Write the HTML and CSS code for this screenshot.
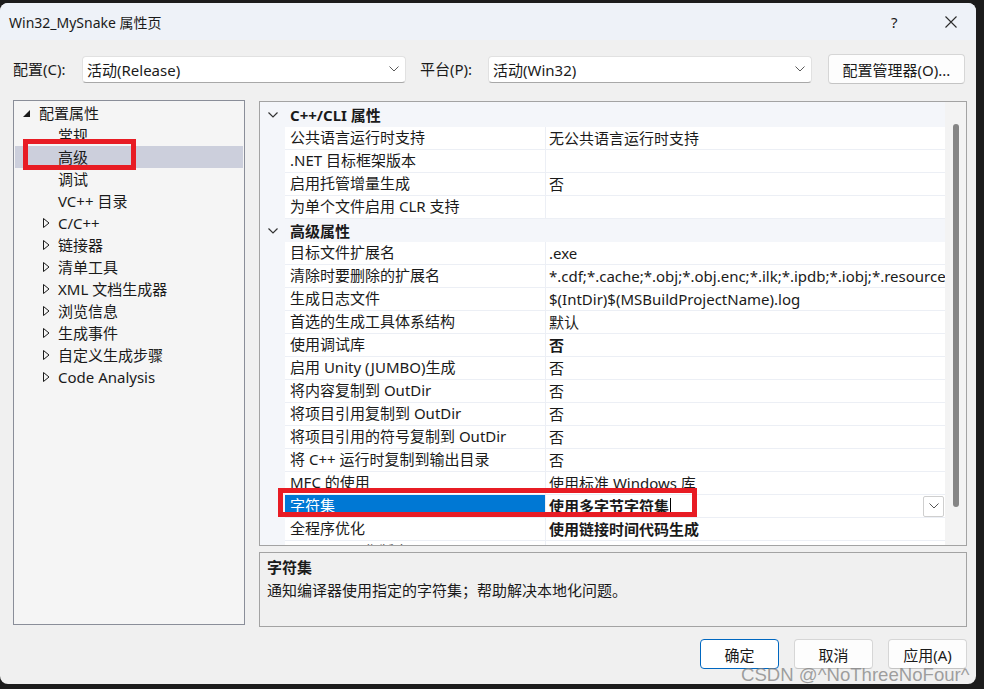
FILE: index.html
```html
<!DOCTYPE html>
<html lang="zh-CN">
<head>
  <meta charset="UTF-8">
  <title>Win32_MySnake 属性页</title>
  <link rel="stylesheet" href="styles.css">
</head>
<body>
  <div class="dialog">
    <div class="titlebar">
      <span class="title">Win32_MySnake 属性页</span>
      <span class="help">?</span>
      <span class="close">
        <svg width="12" height="12" viewBox="0 0 12 12"><path d="M0.5 0.5 L11.5 11.5 M11.5 0.5 L0.5 11.5" stroke="#2b2b2b" stroke-width="1.1" fill="none"/></svg>
      </span>
    </div>

    <div class="content">
      <div class="config-row">
        <label class="lbl">配置(C):</label>
        <div class="combo">
          <span>活动(Release)</span>
          <svg class="chev" width="10" height="6" viewBox="0 0 10 6"><path d="M0.5 0.5 L5 5 L9.5 0.5" stroke="#5a5a5a" fill="none"/></svg>
        </div>
        <label class="lbl lbl-platform">平台(P):</label>
        <div class="combo">
          <span>活动(Win32)</span>
          <svg class="chev" width="10" height="6" viewBox="0 0 10 6"><path d="M0.5 0.5 L5 5 L9.5 0.5" stroke="#5a5a5a" fill="none"/></svg>
        </div>
        <button class="btn btn-manager">配置管理器(O)...</button>
      </div>

      <div class="main">
        <!-- left: property category tree -->
        <div class="tree">
          <div class="node root">
            <span class="tw"><svg width="8" height="7" viewBox="0 0 8 7"><path d="M7 0 L7 7 L0 7 Z" fill="#1a1a1a"/></svg></span>
            <span>配置属性</span>
          </div>
          <div class="node leaf"><span>常规</span></div>
          <div class="node leaf selected"><span>高级</span></div>
          <div class="node leaf"><span>调试</span></div>
          <div class="node leaf"><span>VC++ 目录</span></div>
          <div class="node child"><span class="tw"><svg width="7" height="10" viewBox="0 0 7 10"><path d="M0.5 0.5 L6 5 L0.5 9.5 Z" stroke="#1a1a1a" fill="none"/></svg></span><span>C/C++</span></div>
          <div class="node child"><span class="tw"><svg width="7" height="10" viewBox="0 0 7 10"><path d="M0.5 0.5 L6 5 L0.5 9.5 Z" stroke="#1a1a1a" fill="none"/></svg></span><span>链接器</span></div>
          <div class="node child"><span class="tw"><svg width="7" height="10" viewBox="0 0 7 10"><path d="M0.5 0.5 L6 5 L0.5 9.5 Z" stroke="#1a1a1a" fill="none"/></svg></span><span>清单工具</span></div>
          <div class="node child"><span class="tw"><svg width="7" height="10" viewBox="0 0 7 10"><path d="M0.5 0.5 L6 5 L0.5 9.5 Z" stroke="#1a1a1a" fill="none"/></svg></span><span>XML 文档生成器</span></div>
          <div class="node child"><span class="tw"><svg width="7" height="10" viewBox="0 0 7 10"><path d="M0.5 0.5 L6 5 L0.5 9.5 Z" stroke="#1a1a1a" fill="none"/></svg></span><span>浏览信息</span></div>
          <div class="node child"><span class="tw"><svg width="7" height="10" viewBox="0 0 7 10"><path d="M0.5 0.5 L6 5 L0.5 9.5 Z" stroke="#1a1a1a" fill="none"/></svg></span><span>生成事件</span></div>
          <div class="node child"><span class="tw"><svg width="7" height="10" viewBox="0 0 7 10"><path d="M0.5 0.5 L6 5 L0.5 9.5 Z" stroke="#1a1a1a" fill="none"/></svg></span><span>自定义生成步骤</span></div>
          <div class="node child"><span class="tw"><svg width="7" height="10" viewBox="0 0 7 10"><path d="M0.5 0.5 L6 5 L0.5 9.5 Z" stroke="#1a1a1a" fill="none"/></svg></span><span>Code Analysis</span></div>
          <div class="mark mark-tree"></div>
        </div>

        <div class="right">
          <!-- property grid -->
          <div class="grid">
            <div class="grid-body">
              <div class="cat first">
                <svg class="cat-chev" width="10" height="6" viewBox="0 0 10 6"><path d="M0.5 0.5 L5 5 L9.5 0.5" stroke="#333" stroke-width="1.2" fill="none"/></svg>
                <span>C++/CLI 属性</span>
              </div>
              <div class="row"><div class="pad"></div><div class="name">公共语言运行时支持</div><div class="val">无公共语言运行时支持</div></div>
              <div class="row"><div class="pad"></div><div class="name">.NET 目标框架版本</div><div class="val"></div></div>
              <div class="row"><div class="pad"></div><div class="name">启用托管增量生成</div><div class="val">否</div></div>
              <div class="row"><div class="pad"></div><div class="name">为单个文件启用 CLR 支持</div><div class="val"></div></div>
              <div class="cat">
                <svg class="cat-chev" width="10" height="6" viewBox="0 0 10 6"><path d="M0.5 0.5 L5 5 L9.5 0.5" stroke="#333" stroke-width="1.2" fill="none"/></svg>
                <span>高级属性</span>
              </div>
              <div class="row"><div class="pad"></div><div class="name">目标文件扩展名</div><div class="val">.exe</div></div>
              <div class="row"><div class="pad"></div><div class="name">清除时要删除的扩展名</div><div class="val">*.cdf;*.cache;*.obj;*.obj.enc;*.ilk;*.ipdb;*.iobj;*.resources;*.tlb;*.tli;*.tlh;*.tmp;*.rsp;*.pgc;*.pgd</div></div>
              <div class="row"><div class="pad"></div><div class="name">生成日志文件</div><div class="val">$(IntDir)$(MSBuildProjectName).log</div></div>
              <div class="row"><div class="pad"></div><div class="name">首选的生成工具体系结构</div><div class="val">默认</div></div>
              <div class="row"><div class="pad"></div><div class="name">使用调试库</div><div class="val bold">否</div></div>
              <div class="row"><div class="pad"></div><div class="name">启用 Unity (JUMBO)生成</div><div class="val">否</div></div>
              <div class="row"><div class="pad"></div><div class="name">将内容复制到 OutDir</div><div class="val">否</div></div>
              <div class="row"><div class="pad"></div><div class="name">将项目引用复制到 OutDir</div><div class="val">否</div></div>
              <div class="row"><div class="pad"></div><div class="name">将项目引用的符号复制到 OutDir</div><div class="val">否</div></div>
              <div class="row"><div class="pad"></div><div class="name">将 C++ 运行时复制到输出目录</div><div class="val">否</div></div>
              <div class="row"><div class="pad"></div><div class="name">MFC 的使用</div><div class="val">使用标准 Windows 库</div></div>
              <div class="row active">
                <div class="pad"></div>
                <div class="name">字符集</div>
                <div class="val bold">
                  <span>使用多字节字符集</span><span class="caret"></span>
                  <span class="drop"><svg width="10" height="6" viewBox="0 0 10 6"><path d="M0.5 0.5 L5 5 L9.5 0.5" stroke="#555" fill="none"/></svg></span>
                </div>
              </div>
              <div class="row"><div class="pad"></div><div class="name">全程序优化</div><div class="val bold">使用链接时间代码生成</div></div>
              <div class="row"><div class="pad"></div><div class="name">MSVC 工具集版本</div><div class="val">默认</div></div>
            </div>
            <div class="scroll"><div class="thumb"></div></div>
            <div class="mark mark-grid"></div>
          </div>

          <div class="desc">
            <div class="desc-title">字符集</div>
            <div>通知编译器使用指定的字符集；帮助解决本地化问题。</div>
          </div>
        </div>
      </div>

      <div class="buttons">
        <button class="btn btn-ok">确定</button>
        <button class="btn">取消</button>
        <button class="btn">应用(A)</button>
      </div>
    </div>

    <div class="watermark">CSDN @^NoThreeNoFour^</div>
  </div>
</body>
</html>
```

FILE: styles.css
```css
html, body {
  margin: 0;
  padding: 0;
}
body {
  width: 984px;
  height: 689px;
  overflow: hidden;
  background: #1c1c1c;
  font-family: "Noto Sans", "Noto Sans CJK SC", sans-serif;
  font-size: 15px;
  color: #1a1a1a;
}

.dialog {
  position: relative;
  width: 976px;
  height: 681px;
  margin-top: 3px;
  background: #f0f0f0;
  border-radius: 8px;
  overflow: hidden;
}

/* title bar */
.titlebar {
  height: 37px;
  display: flex;
  align-items: center;
  padding-left: 9px;
  background: #eef2f8;
}
.title {
  font-size: 14px;
}
.help {
  margin-left: auto;
  font-size: 15px;
  width: 8px;
}
.close {
  display: flex;
  margin-left: 46px;
  margin-right: 19px;
}

.content {
  padding: 14px 9px 0 13px;
}

/* configuration / platform row */
.config-row {
  display: flex;
  align-items: center;
  height: 30px;
}
.lbl {
  width: 69px;
  line-height: 20px;
}
.lbl-platform {
  width: 68px;
  margin-left: 14px;
}
.combo {
  width: 324px;
  height: 27px;
  box-sizing: border-box;
  display: flex;
  align-items: center;
  padding: 0 6px 0 4px;
  background: #fff;
  border: 1px solid #e1e1e1;
  border-bottom-color: #a8a8a8;
  border-radius: 4px;
}
.combo .chev {
  margin-left: auto;
}

.btn {
  font-family: inherit;
  font-size: 15px;
  color: #1a1a1a;
  background: #fdfdfd;
  border: 1px solid #d6d6d6;
  border-bottom-color: #c4c4c4;
  border-radius: 4px;
  height: 30px;
  padding: 0;
}
.btn-manager {
  width: 137px;
  margin-left: 16px;
}

.main {
  display: flex;
  gap: 14px;
  margin-top: 16px;
  height: 527px;
}

/* category tree */
.tree {
  position: relative;
  width: 232px;
  height: 525px;
  box-sizing: border-box;
  padding: 1px;
  background: #f5f5f5;
  border: 1px solid #8a8e99;
}
.node {
  display: flex;
  align-items: center;
  height: 22px;
  line-height: 22px;
  white-space: nowrap;
}
.node .tw {
  display: flex;
  align-items: center;
}
.root {
  padding-left: 8px;
}
.root .tw {
  width: 16px;
}
.child {
  padding-left: 28px;
}
.child .tw {
  width: 15px;
}
.leaf {
  padding-left: 43px;
}
.selected {
  background: #cccfdc;
}

.right {
  flex: 1;
  display: flex;
  flex-direction: column;
  gap: 6px;
}

/* property grid */
.grid {
  position: relative;
  display: flex;
  height: 445px;
  margin-top: 1px;
  box-sizing: border-box;
  border: 1px solid #a3a3a3;
  background: #fff;
}
.grid-body {
  width: 685px;
  overflow: hidden;
  background: #f4f6fa;
}
.cat {
  display: flex;
  align-items: center;
  height: 23px;
  font-weight: bold;
  background: #f4f6fa;
}
.cat.first {
  height: 25px;
}
.cat-chev {
  margin-left: 8px;
  margin-right: 12px;
}
.row {
  display: flex;
  height: 23px;
  line-height: 21px;
  white-space: nowrap;
}
.row .pad {
  width: 25px;
  flex: none;
  background: #f4f6fa;
}
.row .name {
  width: 255px;
  flex: none;
  padding-left: 5px;
  background: #fff;
  border-right: 1px solid #eceff5;
  border-bottom: 1px solid #eceff5;
  overflow: hidden;
}
.row .val {
  flex: 1;
  display: flex;
  align-items: center;
  padding-left: 3px;
  background: #fff;
  border-bottom: 1px solid #eceff5;
  overflow: hidden;
}
.val.bold {
  font-weight: bold;
}
.row.active .name {
  background: #0078d4;
  color: #fff;
}
.caret {
  width: 1px;
  height: 17px;
  margin-left: 1px;
  background: #000;
}
.drop {
  display: flex;
  align-items: center;
  justify-content: center;
  width: 19px;
  height: 19px;
  margin-left: auto;
  margin-right: 1px;
  background: #fff;
  border: 1px solid #cfcfcf;
  border-radius: 2px;
}

.scroll {
  flex: 1;
  background: #f3f3f3;
}
.thumb {
  width: 6px;
  height: 383px;
  margin: 22px 0 0 8px;
  background: #858585;
  border-radius: 3px;
}

/* description pane */
.desc {
  height: 75px;
  box-sizing: border-box;
  padding: 3px 7px;
  border: 1px solid #a3a3a3;
  line-height: 23px;
}
.desc-title {
  font-weight: bold;
}

.buttons {
  display: flex;
  justify-content: flex-end;
  gap: 15px;
  margin-top: 12px;
}
.buttons .btn {
  width: 79px;
}
.btn-ok {
  border: 1px solid #0067c0;
  background: #fff;
}

/* red highlight boxes drawn over the dialog */
.mark {
  position: absolute;
  border: 5px solid #e81c24;
  pointer-events: none;
}
.mark-tree {
  left: 9px;
  top: 38px;
  width: 103px;
  height: 21px;
}
.mark-grid {
  left: 18px;
  top: 386px;
  width: 409px;
  height: 19px;
}

.watermark {
  position: absolute;
  left: 741px;
  top: 661px;
  font-family: "Liberation Sans", sans-serif;
  font-size: 18.6px;
  color: rgba(130, 130, 130, 0.75);
  white-space: nowrap;
}
```
